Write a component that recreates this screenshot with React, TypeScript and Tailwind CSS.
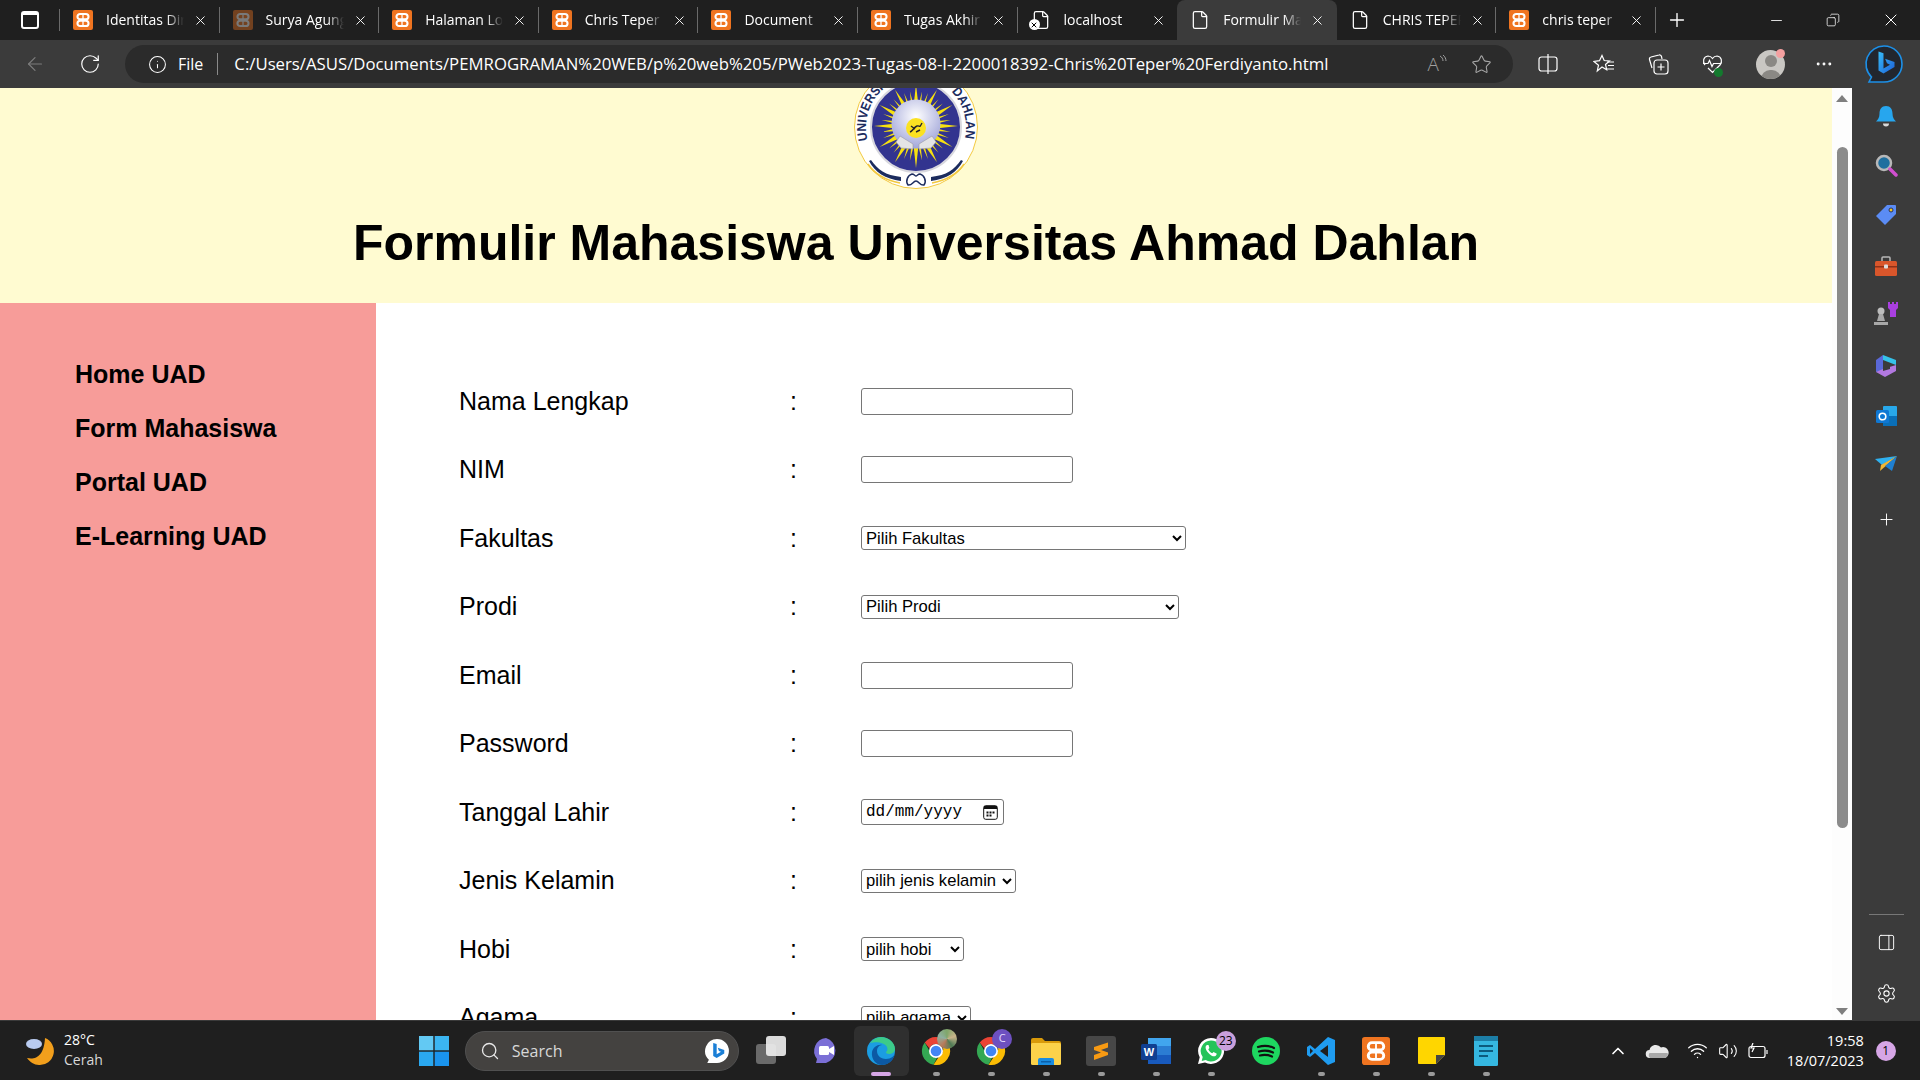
import {
  ArrowLeft,
  RotateCw,
  Info,
  Star,
  MoreHorizontal,
  X,
  Plus,
  Minus,
  File,
  Search,
  Settings,
  PanelRight,
  ChevronUp,
  Wifi,
  Volume2,
  Copy,
} from "lucide-react";

const sans = "font-['Open_Sans',sans-serif]";
const arial = "font-['Liberation_Sans',Arial,sans-serif]";

function XamppIcon({ size = 20, dim = false }: { size?: number; dim?: boolean }) {
  return (
    <svg width={size} height={size} viewBox="0 0 20 20" className={dim ? "opacity-40" : ""}>
      <rect width="20" height="20" rx="2" fill="#ef7420" />
      <g fill="none" stroke="#fff" strokeWidth="2.100">
        <rect x="4.500" y="4" width="11" height="5.300" rx="2.600" />
        <rect x="4.500" y="10.700" width="11" height="5.300" rx="2.600" />
      </g>
      <path d="M10 4.500v11" stroke="#fff" strokeWidth="1.300" />
    </svg>
  );
}

function ChromeIcon({ size = 30 }: { size?: number }) {
  return (
    <svg width={size} height={size} viewBox="0 0 30 30">
      <path d="M15 1a14 14 0 0 1 12.100 7H15a7 7 0 0 0-6.500 4.400L3.700 6.600A14 14 0 0 1 15 1z" fill="#ea4335" />
      <path d="M3.700 6.600l6.200 10.900A7 7 0 0 0 16 22l-3.500 6.800A14 14 0 0 1 3.700 6.600z" fill="#34a853" />
      <path d="M27.100 8A14 14 0 0 1 12.500 28.800L19 19a7 7 0 0 0 1-11z" fill="#fbbc04" />
      <circle cx="15" cy="15" r="7" fill="#fff" />
      <circle cx="15" cy="15" r="5.300" fill="#4285f4" />
    </svg>
  );
}

function BingIcon({ size = 22 }: { size?: number }) {
  return (
    <svg width={size} height={size} viewBox="0 0 24 24">
      <path d="M12 1a11 11 0 0 1 0 22H3l1.500-3A11 11 0 0 1 12 1z" fill="#fff" />
      <path d="M8.500 4.500l3.200 1.100v9.500l4-2.300-1.900-.9-1.100-2.900 6 2v3.200l-7 4.200-3.200-1.800z" fill="#1b7fd6" />
    </svg>
  );
}

// the big one in the toolbar, bubble outline with the b inside
function BingBubble() {
  return (
    <svg width="40" height="40" viewBox="0 0 40 40" className="shrink-0">
      <defs>
        <linearGradient id="bing-b" x1="0" y1="0" x2="1" y2="1">
          <stop offset="0%" stopColor="#37bdf8" />
          <stop offset="100%" stopColor="#1d5fd8" />
        </linearGradient>
      </defs>
      <path
        d="M20 2a18 18 0 0 1 0 36H5l2.500-5A18 18 0 0 1 20 2z"
        fill="#22262e"
        stroke="#1c90e8"
        strokeWidth="1.600"
      />
      <path
        d="M14.500 7.500l5 1.700v15.300l6.500-3.700-3-1.500-1.900-4.600 9.400 3.200v5l-11 6.500-5-2.800z"
        fill="url(#bing-b)"
      />
    </svg>
  );
}

// logo UAD, top part gets cut by the header
function UadLogo() {
  const rays = Array.from({ length: 36 }, (_, i) => i * 10);
  return (
    <svg width="126" height="126" viewBox="0 0 126 126" className="-mt-[24px] shrink-0">
      <defs>
        <path id="uad-arc" d="M 14.700 76 A 50 50 0 1 1 111.300 76" />
        <radialGradient id="uad-globe" cx="50%" cy="35%" r="70%">
          <stop offset="0%" stopColor="#ffffff" />
          <stop offset="100%" stopColor="#9a9fd6" />
        </radialGradient>
      </defs>
      <circle cx="63" cy="63" r="61.500" fill="#fff" stroke="#f3c93f" strokeWidth="1" />
      <circle cx="63" cy="63" r="45" fill="#32348f" stroke="#d8d8de" strokeWidth="2" />
      <text fontFamily="Liberation Sans" fontWeight="700" fontSize="13" fill="#1c2c5e">
        <textPath href="#uad-arc" textLength="181" lengthAdjust="spacingAndGlyphs">
          UNIVERSITAS AHMAD DAHLAN
        </textPath>
      </text>
      <g transform="translate(63 62)">
        {rays.map((deg) => (
          <polygon
            key={deg}
            points={deg % 30 === 0 ? "-2.200,-22 0,-42 2.200,-22" : "-1.100,-22 0,-35 1.100,-22"}
            fill="#f7e10f"
            transform={`rotate(${deg})`}
          />
        ))}
      </g>
      <circle cx="63" cy="60" r="24.500" fill="url(#uad-globe)" />
      <path d="M48 84l-5-6 4-6 13 8v5zM78 84l5-6-4-6-13 8v5z" fill="#e4e4e6" stroke="#9b9ba3" strokeWidth="0.600" />
      <circle cx="63" cy="64" r="10" fill="#fbe222" />
      <path d="M57 68c3-1 4-5 7-6s2 3 5-3M58 62l4 3m1 3l4-2" stroke="#24242a" strokeWidth="1.400" fill="none" />
      <path d="M18 96c7 10 14 15 30 17v4c-16-2-26-9-32-20z" fill="#1c2c5e" />
      <path d="M15 100c6 9 16 16 32 19" stroke="#f3c93f" strokeWidth="1.500" fill="none" />
      <path d="M108 96c-7 10-14 15-30 17v4c16-2 26-9 32-20z" fill="#1c2c5e" />
      <path d="M111 100c-6 9-16 16-32 19" stroke="#f3c93f" strokeWidth="1.500" fill="none" />
      <path d="M55 121c-3-4 0-10 4-11 2 0 3 2 4 2s2-2 4-2c4 1 7 7 4 11-4 1-5-4-8-4s-4 5-8 4z" fill="none" stroke="#1c2c5e" strokeWidth="1.500" />
    </svg>
  );
}

type TabInfo = { title: string; icon: "xampp" | "xamppDim" | "file" | "fileX"; active?: boolean; noSep?: boolean };

const tabs: TabInfo[] = [
  { title: "Identitas Diri", icon: "xampp" },
  { title: "Surya Agung", icon: "xamppDim" },
  { title: "Halaman Login", icon: "xampp" },
  { title: "Chris Teper F", icon: "xampp" },
  { title: "Document", icon: "xampp" },
  { title: "Tugas Akhir", icon: "xampp" },
  { title: "localhost", icon: "fileX", noSep: true },
  { title: "Formulir Mahasiswa", icon: "file", active: true, noSep: true },
  { title: "CHRIS TEPER", icon: "file" },
  { title: "chris teper", icon: "xampp" },
];

function Tab({ tab }: { tab: TabInfo }) {
  return (
    <div
      className={`flex h-10 w-[159.600px] shrink-0 items-center pl-[13px] ${
        tab.active ? "rounded-t-lg bg-[#3b3b3b]" : ""
      } ${tab.noSep ? "" : "border-r border-[#6a6a6a] [border-image:linear-gradient(transparent_20%,#6a6a6a_20%,#6a6a6a_80%,transparent_80%)_1]"}`}
    >
      <span className="flex w-[33px] shrink-0">
        {tab.icon === "xampp" && <XamppIcon />}
        {tab.icon === "xamppDim" && <XamppIcon dim />}
        {tab.icon === "file" && <File size={20} strokeWidth={1.500} className="text-white" />}
        {tab.icon === "fileX" && (
          <span className="relative flex">
            <File size={20} strokeWidth={1.500} className="text-white" />
            <span className="absolute -left-[2px] bottom-0 flex h-[11px] w-[11px] items-center justify-center rounded-full bg-white">
              <X size={8} strokeWidth={3} className="text-black" />
            </span>
          </span>
        )}
      </span>
      <span
        className={`-mt-[2px] w-[78px] shrink-0 overflow-hidden whitespace-nowrap text-[14px] text-white [mask-image:linear-gradient(to_right,black_78%,transparent)] ${sans}`}
      >
        {tab.title}
      </span>
      <X size={15} strokeWidth={1.500} className="ml-[9px] shrink-0 text-white" />
    </div>
  );
}

function TabStrip() {
  return (
    <div className="flex h-10 shrink-0 items-center bg-[#1f1f1f] pl-[21px]">
      <div className="w-[38px] shrink-0">
        <div className="h-[18px] w-[18px] rounded-[3px] border-2 border-white border-t-[4px]" />
      </div>
      <div className="h-[22px] w-px shrink-0 bg-[#6a6a6a]" />
      {tabs.map((t) => (
        <Tab key={t.title} tab={t} />
      ))}
      <Plus size={22} strokeWidth={1.500} className="ml-[10px] shrink-0 text-white" />
      <div className="ml-auto flex items-center text-white">
        <Minus size={17} strokeWidth={1.200} />
        <Copy size={14} strokeWidth={1.300} className="ml-[41px] -scale-x-100" />
        <X size={20} strokeWidth={1.200} className="ml-[41px] mr-[19px]" />
      </div>
    </div>
  );
}

function Toolbar() {
  return (
    <div className="flex h-12 shrink-0 items-center bg-[#3b3b3b] pl-[24px] text-white">
      <ArrowLeft size={22} strokeWidth={1.300} className="shrink-0 text-[#7d7d7d]" />
      <RotateCw size={22} strokeWidth={1.300} className="ml-[33px] shrink-0" />
      <div className="ml-[24px] flex h-[38px] w-[1388px] shrink-0 items-center rounded-[19px] bg-[#2b2b2b] pl-[23px]">
        <Info size={19} strokeWidth={1.300} className="shrink-0" />
        <span className={`ml-[11px] text-[16px] ${sans}`}>File</span>
        <span className="ml-[14px] h-[22px] w-px bg-[#8a8a8a]" />
        <span className={`ml-[16px] whitespace-nowrap text-[16.750px] ${sans}`}>
          C:/Users/ASUS/Documents/PEMROGRAMAN%20WEB/p%20web%205/PWeb2023-Tugas-08-I-2200018392-Chris%20Teper%20Ferdiyanto.html
        </span>
        <span className={`ml-auto flex items-start text-[19px] font-light leading-none text-[#a0a0a0] ${sans}`}>
          A
          <svg width="8" height="10" viewBox="0 0 8 10" fill="none" stroke="#a0a0a0" strokeWidth="1">
            <path d="M1 1c2 1 3 3 3 5M4 0c2 1.500 3 4 3 6" />
          </svg>
        </span>
        <Star size={21} strokeWidth={1.200} className="ml-[24px] mr-[21px] shrink-0 text-[#a8a8a8]" />
      </div>
      <svg width="20" height="22" viewBox="0 0 20 22" fill="none" stroke="#fff" strokeWidth="1.200" className="ml-[25px] shrink-0">
        <rect x="1" y="4" width="18" height="14" rx="2.500" />
        <path d="M10 1v20" />
      </svg>
      <svg width="22" height="20" viewBox="0 0 22 20" fill="none" stroke="#fff" strokeWidth="1.200" className="ml-[35px] shrink-0">
        <path d="M9 1.500l2.200 5 5.300.5-4 3.500 1.200 5.200L9 13 4.300 17l1.200-5.800L1 7.500l5.500-.8z" />
        <path d="M14 8h7M15 11.500h6M14 15h7" />
      </svg>
      <svg width="21" height="21" viewBox="0 0 21 21" fill="none" stroke="#fff" strokeWidth="1.200" className="ml-[33px] shrink-0">
        <path d="M4 14L1.500 5.500A2 2 0 0 1 3 3l8-2a2 2 0 0 1 2.500 1.500L14 5" />
        <rect x="6" y="6" width="14" height="14" rx="3" />
        <path d="M13 9.500v7M9.500 13h7" />
      </svg>
      <span className="relative ml-[33px] flex shrink-0">
        <svg width="21" height="20" viewBox="0 0 21 20" fill="none" stroke="#fff" strokeWidth="1.200">
          <path d="M3 11C.5 8 1 2.500 6 2c2 0 3.500 1 4.500 2.500C11.500 3 13 2 15 2c5 .5 5.500 6 3 9l-7.500 7.500L6 14M1 9.500h5l1.500-3 2.500 6 1.500-3h8" />
        </svg>
        <span className="absolute -bottom-[3px] right-0 h-[9px] w-[9px] rounded-full bg-[#137a2e]" />
      </span>
      <span className="relative ml-[33px] flex h-[29px] w-[29px] shrink-0 items-end justify-center overflow-hidden rounded-full bg-[#c9c7c3]">
        <span className="absolute top-[5px] h-[12px] w-[12px] rounded-full bg-[#8a8884]" />
        <span className="h-[9px] w-[20px] rounded-t-full bg-[#8a8884]" />
      </span>
      <span className="relative -ml-[9px] -mt-[22px] h-[9px] w-[9px] shrink-0 rounded-full bg-[#f4a0a0]" />
      <MoreHorizontal size={20} strokeWidth={1.500} className="ml-[29px] shrink-0" />
      <span className="ml-[30px] flex shrink-0">
        <BingBubble />
      </span>
    </div>
  );
}

const menuItems = ["Home UAD", "Form Mahasiswa", "Portal UAD", "E-Learning UAD"];

const inputCls = "block h-[27px] w-[212px] rounded-[3px] border border-[#767676] bg-white";
const selectCls = `block h-[24px] rounded-[3px] border border-[#767676] bg-white text-[16.600px] text-black ${arial}`;

type FormRow = { label: string; field: React.ReactNode };

const formRows: FormRow[] = [
  { label: "Nama Lengkap", field: <input className={inputCls} /> },
  { label: "NIM", field: <input className={inputCls} /> },
  {
    label: "Fakultas",
    field: (
      <select className={`${selectCls} w-[325px]`}>
        <option>Pilih Fakultas</option>
      </select>
    ),
  },
  {
    label: "Prodi",
    field: (
      <select className={`${selectCls} w-[318px]`}>
        <option>Pilih Prodi</option>
      </select>
    ),
  },
  { label: "Email", field: <input className={inputCls} /> },
  { label: "Password", field: <input type="password" className={inputCls} /> },
  {
    label: "Tanggal Lahir",
    field: (
      <div className="flex h-[26px] w-[143px] items-center rounded-[3px] border border-[#767676] pl-[4px] pr-[5px]">
        <span className="whitespace-pre font-['Liberation_Mono',monospace] text-[16px] text-black">
          dd/mm/yyyy
        </span>
        <svg width="15" height="15" viewBox="0 0 15 15" className="ml-auto shrink-0">
          <rect x="0.700" y="0.700" width="13.600" height="13.600" rx="2" fill="none" stroke="#111" strokeWidth="1" />
          <rect x="1" y="1" width="13" height="3" fill="#111" />
          <path d="M3.500 6.500h2v2h-2zM6.500 6.500h2v2h-2zM9.500 6.500h2v2h-2zM3.500 9.500h2v2h-2zM6.500 9.500h2v2h-2z" fill="#111" />
        </svg>
      </div>
    ),
  },
  {
    label: "Jenis Kelamin",
    field: (
      <select className={`${selectCls} w-[155px]`}>
        <option>pilih jenis kelamin</option>
      </select>
    ),
  },
  {
    label: "Hobi",
    field: (
      <select className={`${selectCls} w-[103px]`}>
        <option>pilih hobi</option>
      </select>
    ),
  },
  {
    label: "Agama",
    field: (
      <select className={`${selectCls} w-[110px]`}>
        <option>pilih agama</option>
      </select>
    ),
  },
];

function Page() {
  return (
    <div className={`flex min-w-0 flex-1 flex-col overflow-hidden bg-white text-black ${arial}`}>
      <header className="flex h-[215px] shrink-0 flex-col items-center bg-[#fffbd1]">
        <UadLogo />
        <h1 className="mt-[25px] whitespace-nowrap text-[50px] font-bold leading-[57px]">
          Formulir Mahasiswa Universitas Ahmad Dahlan
        </h1>
      </header>
      <div className="flex flex-1">
        <nav className="flex w-[376px] shrink-0 flex-col gap-[26px] bg-[#f79c99] pl-[75px] pt-[57px]">
          {menuItems.map((m) => (
            <a key={m} className="text-[25px] font-bold leading-[28px]">
              {m}
            </a>
          ))}
        </nav>
        <form className="pl-[83px] pt-[64px]">
          {formRows.map((r) => (
            <div key={r.label} className="flex h-[68.500px] items-center">
              <span className="w-[331px] text-[25px]">{r.label}</span>
              <span className="w-[71px] text-[25px]">:</span>
              {r.field}
            </div>
          ))}
        </form>
      </div>
    </div>
  );
}

function Scrollbar() {
  return (
    <div className="relative flex w-5 shrink-0 flex-col items-center bg-[#fdfdfd]">
      <div className="mt-[7px] h-0 w-0 border-x-[6px] border-b-[7px] border-x-transparent border-b-[#7f7f7f]" />
      <div className="mt-[45px] h-[681px] w-[11px] rounded-full bg-[#8b8b8b]" />
      <div className="mb-[5px] mt-auto h-0 w-0 border-x-[6px] border-t-[7px] border-x-transparent border-t-[#7f7f7f]" />
    </div>
  );
}

function SidePanel() {
  return (
    <aside className="flex w-[68px] shrink-0 flex-col items-center bg-[#3b3b3b] pt-[17px] text-white">
      {/* bell */}
      <svg width="22" height="23" viewBox="0 0 22 23" className="shrink-0">
        <path d="M11 1c4.500 0 6.500 3.500 6.500 7.500 0 4 1.500 6 3.500 8H1c2-2 3.500-4 3.500-8C4.500 4.500 6.500 1 11 1z" fill="#27a6ee" />
        <path d="M8 18.500h6a3 3 0 0 1-6 0z" fill="#d8d8d8" />
      </svg>
      {/* search */}
      <svg width="24" height="24" viewBox="0 0 24 24" className="mt-[25px] shrink-0">
        <circle cx="10" cy="10" r="7" fill="#1f6f9f" stroke="#b8b8b8" strokeWidth="2.500" />
        <path d="M16 16l6 6" stroke="#d14fd0" strokeWidth="3.500" strokeLinecap="round" />
      </svg>
      {/* tag */}
      <svg width="22" height="22" viewBox="0 0 22 22" className="mt-[27px] shrink-0">
        <path d="M12 1h8a1 1 0 0 1 1 1v8L10 21 1 12z" fill="#5b8cf5" />
        <circle cx="16" cy="6" r="2" fill="#f2c81f" stroke="#22306a" />
      </svg>
      {/* toolbox */}
      <svg width="24" height="22" viewBox="0 0 24 22" className="mt-[29px] shrink-0">
        <path d="M8 6V3a1 1 0 0 1 1-1h6a1 1 0 0 1 1 1v3" fill="none" stroke="#b8b8b8" strokeWidth="1.500" />
        <rect x="1" y="6" width="22" height="15" rx="1.500" fill="#d9562b" />
        <rect x="1" y="11" width="22" height="1.500" fill="#8d3118" />
        <rect x="10" y="9.500" width="4" height="4" rx="1" fill="#ddd" />
      </svg>
      {/* chess */}
      <svg width="24" height="24" viewBox="0 0 24 24" className="mt-[25px] shrink-0">
        <path d="M14 0h2v2h2V0h2v2h2V0h2v6l-2 2v7h-6V8l-2-2z" fill="#a93fe0" />
        <circle cx="7" cy="9" r="3.500" fill="#bcbcbc" />
        <path d="M5 12h4l2 7H3zM0 20h14v3H0z" fill="#a8a8a8" />
      </svg>
      {/* office */}
      <svg width="22" height="24" viewBox="0 0 22 24" className="mt-[28px] shrink-0">
        <path d="M8 1l13 5v5L8 6z" fill="#35c1e8" />
        <path d="M1 6l7-5v16l-7 1z" fill="#5a68d8" />
        <path d="M1 18l7-3 13-4v6l-11 6z" fill="#b278e0" />
        <path d="M8 8l7 2v5l-7 2z" fill="#3b3b3b" />
      </svg>
      {/* outlook */}
      <svg width="21" height="21" viewBox="0 0 21 21" className="mt-[28px] shrink-0">
        <rect x="7" y="0" width="14" height="20" rx="1" fill="#28a8ea" />
        <path d="M7 10l14 0v10H7z" fill="#0a6fb8" />
        <rect x="0" y="4" width="13" height="13" rx="1.500" fill="#0f78d4" />
        <circle cx="6.500" cy="10.500" r="3.300" fill="none" stroke="#fff" strokeWidth="1.600" />
      </svg>
      {/* send */}
      <svg width="22" height="16" viewBox="0 0 22 16" className="mt-[29px] shrink-0">
        <path d="M0 3l22-3L7 9z" fill="#2fb1f0" />
        <path d="M22 0L6 9l-1 6z" fill="#f2b632" />
        <path d="M22 0l-5 15-7-5z" fill="#1f7fd0" />
      </svg>
      <Plus size={19} strokeWidth={1.200} className="mt-[38px] shrink-0" />
      <div className="mb-[16px] mt-auto flex flex-col items-center">
        <div className="h-px w-[35px] bg-[#777]" />
        <PanelRight size={19} strokeWidth={1.200} className="mt-[18px] shrink-0" />
        <Settings size={21} strokeWidth={1.200} className="mt-[31px] shrink-0" />
      </div>
    </aside>
  );
}

type AppIcon = { key: string; node: React.ReactNode; dot?: boolean; active?: boolean; badge?: string };

const apps: AppIcon[] = [
  {
    key: "meet",
    node: (
      <svg width="30" height="30" viewBox="0 0 30 30">
        <path d="M15 2a13 13 0 0 1 0 25H5l1-4A13 13 0 0 1 15 2z" fill="#7b6fd6" />
        <rect x="8" y="10" width="10" height="9" rx="1.500" fill="#fff" />
        <path d="M18 13l5-3v9l-5-3z" fill="#fff" />
      </svg>
    ),
  },
  {
    key: "edge",
    active: true,
    node: (
      <svg width="30" height="30" viewBox="0 0 30 30">
        <circle cx="15" cy="15" r="14" fill="#1b9de2" />
        <path d="M29 16c0 4-4 7-9 7-6 0-9-4-9-8 0-3 2-6 5-6-4-1-9 2-10 7C5 23 10 29 16 29c7 0 13-6 13-13z" fill="#0c59a4" />
        <path d="M4 7c3-4 7-6 11-6 7 0 14 5 14 12 0 3-3 5-6 5-2 0-3-1-3-2 1-1 2-2 1-5-2-4-10-6-17-4z" fill="#3ccb8a" />
      </svg>
    ),
  },
  {
    key: "chrome1",
    dot: true,
    node: (
      <span className="relative flex">
        <ChromeIcon />
        <span className="absolute -right-[6px] -top-[7px] h-[20px] w-[20px] rounded-full bg-[conic-gradient(#7fa66a,#c9b48a,#4e7a55,#b87a5a,#8fb0a0,#7fa66a)]" />
      </span>
    ),
  },
  {
    key: "chrome2",
    dot: true,
    node: (
      <span className="relative flex">
        <ChromeIcon />
        <span className={`absolute -right-[6px] -top-[7px] flex h-[20px] w-[20px] items-center justify-center rounded-full bg-[#6d50c0] text-[11px] text-[#e4dcff] ${sans}`}>
          C
        </span>
      </span>
    ),
  },
  {
    key: "explorer",
    dot: true,
    node: (
      <svg width="30" height="28" viewBox="0 0 30 28">
        <path d="M0 3a2 2 0 0 1 2-2h9l3 3h14a2 2 0 0 1 2 2v3H0z" fill="#d99a0a" />
        <rect y="6" width="30" height="22" rx="1.500" fill="#fcd24a" />
        <path d="M7 28v-5a2 2 0 0 1 2-2h12a2 2 0 0 1 2 2v5z" fill="#1a8ce0" />
        <rect x="10" y="24" width="10" height="1.500" fill="#0b5fa8" />
      </svg>
    ),
  },
  {
    key: "sublime",
    dot: true,
    node: (
      <svg width="30" height="30" viewBox="0 0 30 30">
        <rect width="30" height="30" rx="3" fill="#474747" />
        <path d="M8 11l14-4.500v5L15 14l7 2.500V19L8 24v-5l7-2.500L8 14z" fill="#f79a13" />
      </svg>
    ),
  },
  {
    key: "word",
    dot: true,
    node: (
      <svg width="30" height="28" viewBox="0 0 30 28">
        <rect x="7" y="1" width="23" height="26" rx="2" fill="#2b7cd3" />
        <rect x="7" y="1" width="23" height="8" fill="#41a5ee" />
        <rect x="7" y="18" width="23" height="9" fill="#185abd" />
        <rect y="7" width="16" height="16" rx="1.500" fill="#103f91" />
        <text x="8" y="19" textAnchor="middle" fontFamily="Liberation Sans" fontWeight="700" fontSize="11" fill="#fff">W</text>
      </svg>
    ),
  },
  {
    key: "whatsapp",
    dot: true,
    badge: "23",
    node: (
      <svg width="30" height="30" viewBox="0 0 30 30">
        <path d="M15 2a13 13 0 1 1-6 24.500L2 28l1.700-6.700A13 13 0 0 1 15 2z" fill="#fff" />
        <path d="M15 4.500a10.500 10.500 0 1 1-5.300 19.500l-4 1 1-3.900A10.500 10.500 0 0 1 15 4.500z" fill="#25c45a" />
        <path d="M11 9c-2 1-2 4 1 7.500s6 4.500 7.500 3.500c1-1 1.500-2 1-2.500l-3-1.500-1.200 1.200c-1.500-.5-3.500-2.500-4-4l1.100-1.100L12.500 9z" fill="#fff" />
      </svg>
    ),
  },
  {
    key: "spotify",
    node: (
      <svg width="30" height="30" viewBox="0 0 30 30">
        <circle cx="15" cy="15" r="14" fill="#1ed760" />
        <path d="M7 11c6-2 11-1.500 16 1M8 15.500c5-1.500 10-1 14 1M9 19.500c4-1 8-.7 12 1" stroke="#111" strokeWidth="2.200" fill="none" strokeLinecap="round" />
      </svg>
    ),
  },
  {
    key: "vscode",
    dot: true,
    node: (
      <svg width="30" height="30" viewBox="0 0 30 30">
        <path d="M22 1l7 3v22l-7 3L9 17l-5 4-3-2v-8l3-2 5 4z" fill="#1f9cf0" />
        <path d="M22 9l-8 6 8 6z" fill="#1f1f1f" />
        <path d="M4 12l3 3-3 3z" fill="#1f1f1f" />
      </svg>
    ),
  },
  { key: "xampp", dot: true, node: <XamppIcon size={28} /> },
  {
    key: "sticky",
    dot: true,
    node: (
      <svg width="27" height="27" viewBox="0 0 27 27">
        <path d="M1 0h25a1 1 0 0 1 1 1v17l-9 9H1a1 1 0 0 1-1-1V1a1 1 0 0 1 1-1z" fill="#ffd600" />
        <path d="M27 18l-9 9v-9z" fill="#444" />
      </svg>
    ),
  },
  {
    key: "notepad",
    dot: true,
    node: (
      <svg width="24" height="30" viewBox="0 0 24 30">
        <rect y="2" width="24" height="28" rx="1.500" fill="#35b7e0" />
        <rect y="0" width="24" height="5" fill="#1c7ea6" />
        <path d="M5 10h14M5 15h14M5 20h9" stroke="#0c5b7d" strokeWidth="2" />
      </svg>
    ),
  },
];

function TaskApp({ app }: { app: AppIcon }) {
  return (
    <div
      className={`relative flex h-[50px] w-[55px] shrink-0 items-center justify-center ${
        app.active ? "rounded-md bg-[#2f2f2f]" : ""
      }`}
    >
      {app.node}
      {app.dot && <span className="absolute bottom-0 h-[4px] w-[7px] rounded-full bg-[#9a9a9a]" />}
      {app.active && <span className="absolute bottom-0 h-[4px] w-[20px] rounded-full bg-[#d6a6e6]" />}
      {app.badge && (
        <span className={`absolute right-[3px] top-[5px] flex h-[20px] w-[20px] items-center justify-center rounded-full bg-[#c9a0dc] text-[12px] text-black ${sans}`}>
          {app.badge}
        </span>
      )}
    </div>
  );
}

function Taskbar() {
  return (
    <footer className={`flex h-[60px] shrink-0 items-center border-t border-[#3a3a3a] bg-[#1f1f1f] pl-[24px] text-white ${sans}`}>
      <div className="relative h-[32px] w-[32px] shrink-0">
        <svg width="32" height="32" viewBox="0 0 32 32">
          <path d="M21 3a14 14 0 0 1-6 27C10 30 6 27 3 23c9 2 17-2 18-20z" fill="#f29f1c" />
          <ellipse cx="10" cy="9" rx="8" ry="5" fill="#b9cbf0" />
        </svg>
      </div>
      <div className="ml-[8px] -mt-[2px] flex shrink-0 flex-col text-[14px] leading-[20px]">
        <span>28°C</span>
        <span className="text-[#d8d8d8]">Cerah</span>
      </div>
      <svg width="30" height="30" viewBox="0 0 30 30" className="ml-[316px] shrink-0">
        <rect width="14.300" height="14.300" fill="#63c9f3" />
        <rect x="15.700" width="14.300" height="14.300" fill="#3bb5f1" />
        <rect y="15.700" width="14.300" height="14.300" fill="#2aa8f0" />
        <rect x="15.700" y="15.700" width="14.300" height="14.300" fill="#1a94ee" />
      </svg>
      <div className="ml-[16px] flex h-[40px] w-[274px] shrink-0 items-center rounded-full border border-[#505050] bg-[#444240] pl-[14px] pr-[8px]">
        <Search size={20} strokeWidth={1.600} className="shrink-0 text-[#e8e8e8]" />
        <span className="ml-[12px] text-[16px] text-[#d8d8d8]">Search</span>
        <span className="ml-auto flex">
          <BingIcon size={26} />
        </span>
      </div>
      <span className="relative ml-[17px] h-[30px] w-[30px] shrink-0">
        <span className="absolute bottom-[2px] left-0 h-[20px] w-[20px] rounded-[3px] bg-[#6a6a6a]" />
        <span className="absolute right-0 top-0 h-[20px] w-[20px] rounded-[3px] bg-[#f0f0f0] opacity-90" />
      </span>
      <div className="ml-[13px] flex items-center">
        {apps.map((a) => (
          <TaskApp key={a.key} app={a} />
        ))}
      </div>
      <ChevronUp size={20} strokeWidth={2} className="ml-[94px] shrink-0" />
      <svg width="24" height="16" viewBox="0 0 24 16" className="ml-[17px] shrink-0">
        <path d="M5 15a4 4 0 0 1-.500-8A6.500 6.500 0 0 1 16 4.500 5 5 0 0 1 20 15z" fill="#e8e8e8" />
        <path d="M5 15a4 4 0 0 1-.500-5h18a3.500 3.500 0 0 1-2.500 5z" fill="#a8a8a8" />
      </svg>
      <Wifi size={21} strokeWidth={1.500} className="ml-[18px] shrink-0" />
      <Volume2 size={20} strokeWidth={1.300} className="ml-[10px] shrink-0" />
      <svg width="20" height="16" viewBox="0 0 20 16" fill="none" stroke="#fff" strokeWidth="1.200" className="ml-[10px] shrink-0">
        <rect x="1" y="3.500" width="16" height="11" rx="2" />
        <path d="M19 7v4" />
        <path d="M5 0l-2 5h3l-2 4" />
      </svg>
      <div className="ml-[18px] flex w-[78px] shrink-0 flex-col items-end text-[14.500px] leading-[20px]">
        <span>19:58</span>
        <span className="whitespace-nowrap">18/07/2023</span>
      </div>
      <span className="ml-[12px] flex h-[20px] w-[20px] shrink-0 items-center justify-center rounded-full bg-[#d6a6e6] text-[12px] text-black">
        1
      </span>
    </footer>
  );
}

export default function App() {
  return (
    <div className="flex h-screen w-full flex-col overflow-hidden">
      <TabStrip />
      <Toolbar />
      <div className="flex min-h-0 flex-1">
        <Page />
        <Scrollbar />
        <SidePanel />
      </div>
      <Taskbar />
    </div>
  );
}
